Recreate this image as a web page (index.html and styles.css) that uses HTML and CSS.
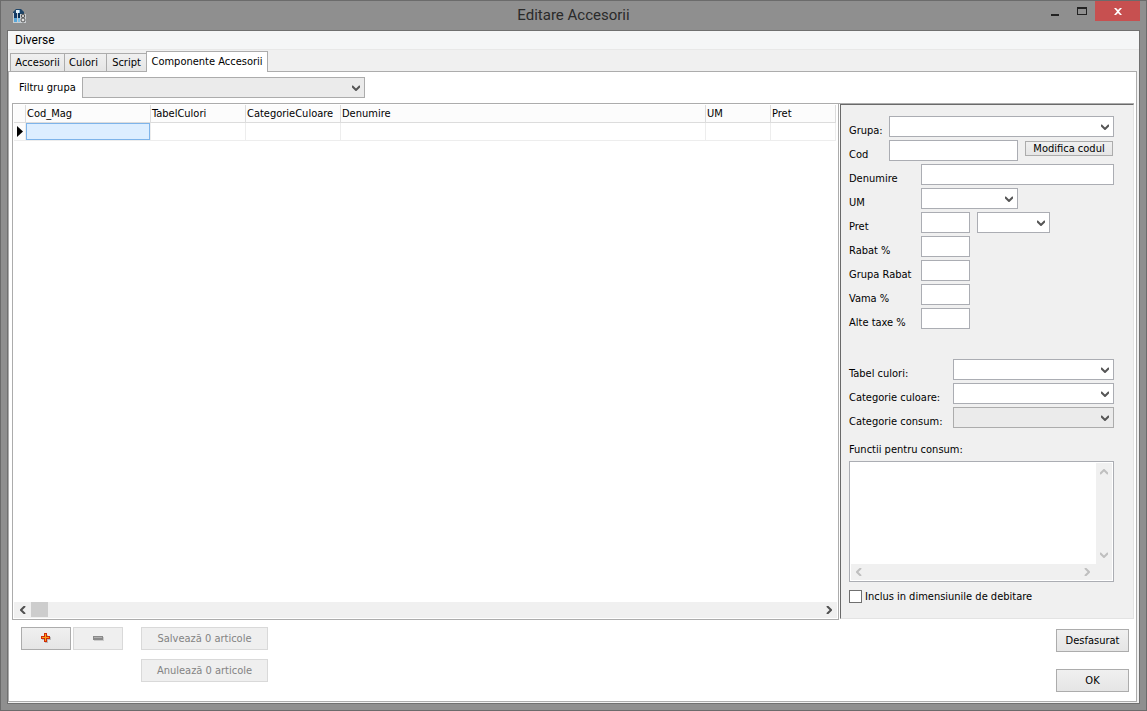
FILE: index.html
```html
<!DOCTYPE html>
<html lang="ro">
<head>
<meta charset="utf-8">
<title>Editare Accesorii</title>
<link rel="stylesheet" href="styles.css">
</head>
<body>
<div class="window">
  <header class="titlebar">
    <svg class="app-icon" viewBox="0 0 14 16" width="14" height="16" aria-hidden="true">
      <path d="M0 6V4l3-3h5l3 3v2z" fill="#1d4468"/>
      <path d="M3 2h3v3H3z" fill="#e6f3fb"/>
      <path d="M6 2h1v3H6z" fill="#7fb6dc"/>
      <path d="M0 5h7v10H0zM7 6h6v9H7z" fill="#c9cdd0"/>
      <path d="M1 5h3v9H1z" fill="#123a66"/>
      <path d="M1 10h3v4H1z" fill="#58a6d8"/>
      <path d="M5 5h2v9H5z" fill="#0a3058"/>
      <path d="M5 10h2v4H5z" fill="#7fc0e6"/>
      <ellipse cx="10" cy="8" rx="1.500" ry="2" fill="#ddd" stroke="#444"/>
      <ellipse cx="10" cy="12" rx="2" ry="2" fill="#ddd" stroke="#555"/>
    </svg>
    <h1 class="title">Editare Accesorii</h1>
    <div class="controls">
      <button class="control" type="button" aria-label="Minimizare"><svg width="10" height="10" viewBox="0 0 10 10"><path d="M1 8h8v2H1z" fill="#222"/></svg></button>
      <button class="control" type="button" aria-label="Maximizare"><svg width="10" height="8" viewBox="0 0 10 8"><path fill-rule="evenodd" d="M0 0h10v8H0zM1 2v5h8V2z" fill="#222"/></svg></button>
      <button class="control close" type="button" aria-label="Închidere"><svg width="8" height="7" viewBox="0 0 8 7"><path d="M0 0h2l2 2 2-2h2L5 3.500 8 7H6L4 5 2 7H0l3-3.500z" fill="#fff"/></svg></button>
    </div>
  </header>

  <main class="client">
    <nav class="menubar"><button class="menu-item" type="button">Diverse</button></nav>
    <div class="tabs" role="tablist">
      <button class="tab" type="button" role="tab">Accesorii</button>
      <button class="tab tab-culori" type="button" role="tab">Culori</button>
      <button class="tab tab-script" type="button" role="tab">Script</button>
      <button class="tab active" type="button" role="tab" aria-selected="true">Componente Accesorii</button>
    </div>

    <section class="page">
      <div class="filter">
        <label for="filtru">Filtru grupa</label>
        <select id="filtru" class="field list filter-select"></select>
      </div>

      <div class="workspace">
        <div class="grid">
          <table class="table">
            <colgroup><col class="c-mark"><col class="c-cod"><col class="c-tab"><col class="c-tab"><col><col class="c-um"><col class="c-um"></colgroup>
            <thead><tr><th></th><th>Cod_Mag</th><th>TabelCulori</th><th>CategorieCuloare</th><th>Denumire</th><th>UM</th><th>Pret</th></tr></thead>
            <tbody><tr><td class="mark"><svg width="6" height="11" viewBox="0 0 6 11"><path d="M0 0l6 5.500L0 11z" fill="#000"/></svg></td><td class="selected"></td><td></td><td></td><td></td><td></td><td></td></tr></tbody>
          </table>
          <div class="scroll-h">
            <button class="arrow" type="button" aria-label="Stânga"><svg width="6" height="8" viewBox="0 0 6 8"><path d="M5 0L1 4l4 4" class="stroke"/></svg></button>
            <span class="thumb"></span>
            <button class="arrow" type="button" aria-label="Dreapta"><svg width="6" height="8" viewBox="0 0 6 8"><path d="M1 0l4 4-4 4" class="stroke"/></svg></button>
          </div>
        </div>

        <form class="panel">
          <div class="row"><label class="l-s" for="grupa">Grupa:</label><select id="grupa" class="field grow"></select></div>
          <div class="row"><label class="l-s" for="cod">Cod</label><input id="cod" class="field w-cod" type="text"><button class="btn small" type="button">Modifica codul</button></div>
          <div class="row"><label class="l-m" for="den">Denumire</label><input id="den" class="field grow" type="text"></div>
          <div class="row"><label class="l-m" for="um">UM</label><select id="um" class="field w-um"></select></div>
          <div class="row"><label class="l-m" for="pret">Pret</label><input id="pret" class="field w-num" type="text"><select class="field w-cur" aria-label="Moneda"></select></div>
          <div class="row"><label class="l-m" for="rabat">Rabat %</label><input id="rabat" class="field w-num" type="text"></div>
          <div class="row"><label class="l-m" for="gr">Grupa Rabat</label><input id="gr" class="field w-num" type="text"></div>
          <div class="row"><label class="l-m" for="vama">Vama %</label><input id="vama" class="field w-num" type="text"></div>
          <div class="row"><label class="l-m" for="taxe">Alte taxe %</label><input id="taxe" class="field w-num" type="text"></div>
          <div class="row second"><label class="l-l" for="tc">Tabel culori:</label><select id="tc" class="field grow"></select></div>
          <div class="row"><label class="l-l" for="cc">Categorie culoare:</label><select id="cc" class="field grow"></select></div>
          <div class="row"><label class="l-l" for="cs">Categorie consum:</label><select id="cs" class="field list grow"></select></div>
          <label class="memo-label" for="functii">Functii pentru consum:</label>
          <div class="memo">
            <textarea id="functii" class="memo-text"></textarea>
            <div class="scroll-v">
              <svg width="8" height="6" viewBox="0 0 8 6"><path d="M0 5l4-4 4 4" class="stroke pale"/></svg>
              <svg width="8" height="6" viewBox="0 0 8 6"><path d="M0 1l4 4 4-4" class="stroke pale"/></svg>
            </div>
            <div class="memo-h">
              <svg width="6" height="8" viewBox="0 0 6 8"><path d="M5 0L1 4l4 4" class="stroke pale"/></svg>
              <svg width="6" height="8" viewBox="0 0 6 8"><path d="M1 0l4 4-4 4" class="stroke pale"/></svg>
            </div>
          </div>
          <label class="check"><input type="checkbox" class="box">Inclus in dimensiunile de debitare</label>
        </form>
      </div>

      <footer class="footer">
        <div class="pair">
          <button class="btn icon" type="button" aria-label="Adaugă"><svg width="11" height="11" viewBox="0 0 11 11"><path d="M4 2h3v2h3v3H7v3H4V7H1V4h3z" fill="#bbb"/><path d="M3 0h3v3h3v3H6v3H3V6H0V3h3z" fill="#d02a08"/><path d="M4 1h1v3h3v1H5v3H4V5H1V4h3z" fill="#f9a11b"/></svg></button>
          <button class="btn icon" type="button" disabled aria-label="Șterge"><svg width="11" height="11" viewBox="0 0 11 11"><path d="M1 4h10v4H1z" fill="#ccc"/><path d="M0 3h10v4H0z" fill="#8a8a8a"/><path d="M1 4h8v1H1z" fill="#b0b0b0"/></svg></button>
        </div>
        <div class="stack">
          <button class="btn wide" type="button" disabled>Salvează 0 articole</button>
          <button class="btn wide" type="button" disabled>Anulează 0 articole</button>
        </div>
        <div class="stack end">
          <button class="btn" type="button">Desfasurat</button>
          <button class="btn" type="button">OK</button>
        </div>
      </footer>
    </section>
  </main>
</div>
</body>
</html>
```
FILE: styles.css
```css
* { box-sizing: border-box; }

body {
  margin: 0;
  color: #000;
  font: 11px/13px "DejaVu Sans Condensed", "Noto Sans", sans-serif;
}

button, input, select, textarea {
  margin: 0;
  padding: 0;
  border: 0;
  border-radius: 0;
  color: inherit;
  font: inherit;
}

svg { display: block; }

.window {
  display: flex;
  flex-direction: column;
  min-height: 100vh;
  padding: 0 6px 6px;
  border: 1px solid #6b6b6b;
  background: #8f8f8f;
}

/* Title bar */
.titlebar {
  display: grid;
  grid-template-columns: 1fr auto 1fr;
  height: 29px;
}

.app-icon { margin: 7px 0 0 6px; }

.title {
  margin: 0;
  padding-top: 4px;
  color: #2a2a2a;
  font: 15px/21px Roboto, "Noto Sans", sans-serif;
}

.controls {
  display: flex;
  justify-content: flex-end;
  height: 20px;
}

.control {
  display: grid;
  place-items: center;
  width: 27px;
  background: none;
}

.close {
  width: 45px;
  background: #c75050;
}

/* Client area */
.client {
  display: flex;
  flex: 1;
  flex-direction: column;
  padding-bottom: 1px;
  border: 1px solid #707070;
  background: #f0f0f0;
}

.menubar {
  height: 19px;
  border-bottom: 1px solid #e8e8e8;
  background: #f5f6f7;
}

.menu-item {
  padding: 3px 7px 0;
  background: none;
  font-family: Roboto, "Noto Sans", sans-serif;
  font-size: 12px;
}

.tabs {
  display: flex;
  align-items: flex-end;
  height: 21px;
  padding-left: 2px;
}

.tab {
  width: 54px;
  height: 18px;
  border: 1px solid #acacac;
  border-right: 0;
  border-bottom: 0;
  background: linear-gradient(#f0f0f0, #e5e5e5);
}

.tab-culori { width: 42px; padding-right: 4px; }
.tab-script { width: 40px; }

.tab.active {
  z-index: 1;
  width: 122px;
  height: 21px;
  margin-bottom: -1px;
  border-right: 1px solid #acacac;
  padding-bottom: 2px;
  background: #fff;
}

.page {
  display: flex;
  flex: 1;
  flex-direction: column;
  margin-right: 2px;
  border: 1px solid #acacac;
  background: #fff;
}

.filter {
  display: flex;
  align-items: center;
  gap: 8px;
  padding: 5px 10px;
}

.filter label { width: 55px; white-space: nowrap; }
.filter-select { width: 283px; }

/* Fields */
.field {
  height: 21px;
  border: 1px solid #abadb3;
  background-color: #fff;
}

select.field {
  appearance: none;
  background-image: url("data:image/svg+xml,%3Csvg xmlns='http://www.w3.org/2000/svg' width='8' height='6'%3E%3Cpath d='M0 1l4 4 4-4' fill='none' stroke='%23555' stroke-width='2'/%3E%3C/svg%3E");
  background-repeat: no-repeat;
  background-position: right 4px center;
}

select.list {
  border-color: #acacac;
  background-color: #ebebeb;
}

/* Workspace */
.workspace {
  display: flex;
  flex: 1;
  margin: 0 2px 0 3px;
  border-top: 1px solid #acacac;
}

.grid {
  display: flex;
  flex: 1;
  flex-direction: column;
  justify-content: space-between;
  min-width: 0;
  margin-bottom: -1px;
  padding: 1px;
  border: 1px solid #acacac;
  border-top: 0;
}

.table {
  width: calc(100% - 1px);
  border-spacing: 0;
  table-layout: fixed;
}

.c-mark { width: 12px; }
.c-cod { width: 125px; }
.c-tab { width: 95px; }
.c-um { width: 65px; }

.table th {
  height: 18px;
  padding: 0 0 0 1px;
  border-right: 1px solid #dcdcdc;
  border-bottom: 1px solid #dcdcdc;
  background: #fcfcfc;
  font-weight: normal;
  text-align: left;
  white-space: nowrap;
}

.table td {
  height: 18px;
  padding: 0;
  border-right: 1px solid #ededed;
  border-bottom: 1px solid #ededed;
}

.table td.mark { padding-left: 3px; background: #fcfcfc; }

.table td.selected {
  background: #def;
  box-shadow: inset 0 0 0 1px #7eb4ea;
}

.scroll-h {
  display: flex;
  height: 16px;
  background: #f0f0f0;
}

.arrow {
  display: grid;
  place-items: center;
  width: 17px;
  background: none;
}

.arrow:last-child { margin-left: auto; }

.thumb {
  width: 17px;
  height: 15px;
  background: #cdcdcd;
}

.stroke { fill: none; stroke: #505050; stroke-width: 2; }
.pale { stroke: #bfbfbf; }

/* Details panel */
.panel {
  display: flex;
  flex-direction: column;
  gap: 3px;
  width: 294px;
  margin-left: 1px;
  padding: 11px 19px 15px 8px;
  border: 1px solid;
  border-color: #696969 #e3e3e3 #e3e3e3 #696969;
  background: #f0f0f0;
}

.row {
  display: flex;
  align-items: flex-start;
}

.row label { flex: none; padding-top: 8px; }
.grow { flex: 1; min-width: 0; }
.l-s { width: 40px; }
.l-m { width: 72px; }
.l-l { width: 104px; }
.w-cod { width: 129px; }
.w-um { width: 97px; }
.w-num { width: 49px; }
.w-cur { width: 73px; margin-left: 7px; }
.second { margin-top: 27px; }
.memo-label { margin: 12px 0 2px; }

.memo {
  display: grid;
  flex: 1;
  grid-template: 1fr 16px / 1fr 16px;
  min-height: 121px;
  padding: 1px;
  border: 1px solid #abadb3;
  background: #fff;
}

.memo-text {
  width: 100%;
  height: 100%;
  outline: 0;
  resize: none;
}

.scroll-v {
  display: flex;
  flex-direction: column;
  align-items: center;
  justify-content: space-between;
  padding: 6px 0;
  background: #f0f0f0;
}

.memo-h {
  display: flex;
  grid-column: 1 / 3;
  align-items: center;
  justify-content: space-between;
  padding: 0 22px 0 5px;
  background: #f0f0f0;
}

.check {
  display: flex;
  align-items: center;
  gap: 3px;
  margin-top: 5px;
  white-space: nowrap;
}

.box {
  width: 13px;
  height: 13px;
  border: 1px solid #707070;
  background: #fff;
  appearance: none;
}

/* Buttons */
.btn {
  height: 23px;
  border: 1px solid #acacac;
  background: linear-gradient(#f0f0f0, #e5e5e5);
}

.btn:disabled {
  border-color: #d9d9d9;
  background: #efefef;
  color: #838383;
}

.small { width: 88px; height: 15px; margin: 1px 0 0 7px; }
.icon { display: grid; place-items: center; width: 50px; }

.footer {
  display: flex;
  align-items: flex-start;
  padding: 8px 7px 9px 12px;
}

.pair { display: flex; gap: 2px; }

.stack {
  display: grid;
  gap: 9px;
  width: 127px;
  margin-left: 18px;
}

.end {
  gap: 17px;
  width: 73px;
  margin: 2px 0 0 auto;
}
```
